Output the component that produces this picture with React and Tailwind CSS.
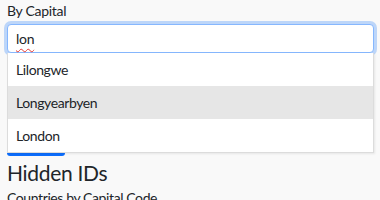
import React from 'react';

const ITEMS = ['Lilongwe', 'Longyearbyen', 'London'];

export default function App() {
  return (
    <div
      className="w-[380px] h-[200px] overflow-hidden bg-[#f9f9f9] text-[#212529] px-[7px]"
      style={{ fontFamily: 'Lato, "Noto Sans", sans-serif' }}
    >
      <div className="text-[14px] leading-[21px] tracking-[-0.3px]">By Capital</div>

      <div className="relative mt-[3px] w-[367px]">
        {/* search input with focus ring */}
        <div className="h-[29px] rounded-[4px] border border-[#86b7fe] bg-white shadow-[0_0_0_3px_rgba(13,110,253,0.25)] flex items-center px-[8px]">
          <span className="text-[14px] tracking-[-0.3px] underline decoration-wavy decoration-[#e53935] decoration-1 underline-offset-[4px]">
            lon
          </span>
        </div>

        {/* suggestions */}
        <div className="relative z-10 bg-white border border-[#dcdcdc] border-t-0 shadow-[1px_1px_2px_rgba(0,0,0,0.08)]">
          {ITEMS.map((item, i) => (
            <div
              key={item}
              className={`h-[33px] flex items-center px-[8px] text-[14px] tracking-[-0.4px] ${
                i === 1 ? 'bg-[#e6e6e6]' : 'bg-white'
              }`}
            >
              {item}
            </div>
          ))}
        </div>

        <div className="w-[58px] h-[4px] -mt-[1px] rounded-b-[3px] bg-[#0d6efd]" />
      </div>

      <h3 className="text-[21px] leading-[28px] mt-[3px] tracking-[-0.3px]">Hidden IDs</h3>
      <div className="text-[14px] leading-[21px] tracking-[-0.4px]">Countries by Capital Code</div>
    </div>
  );
}
